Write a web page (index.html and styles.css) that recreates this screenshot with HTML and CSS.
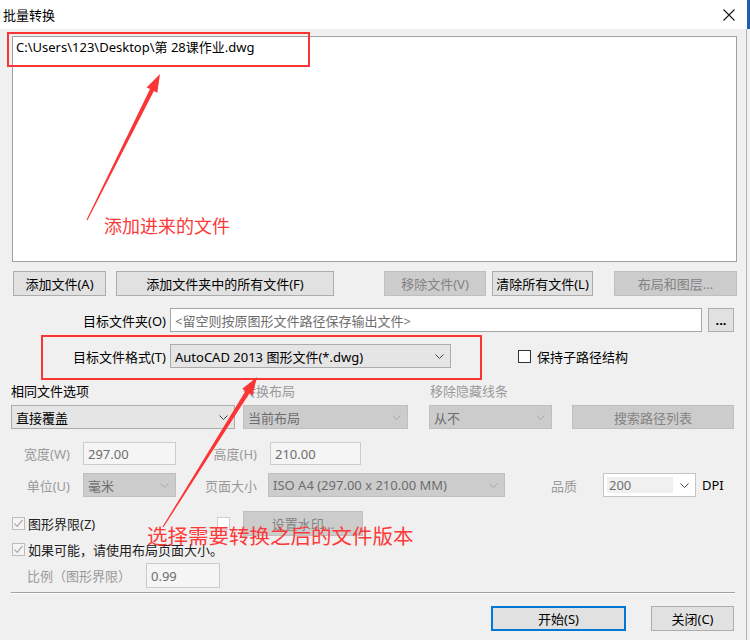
FILE: index.html
```html
<!DOCTYPE html>
<html lang="zh-CN">
<head>
    <meta charset="UTF-8">
    <title>批量转换</title>
    <link rel="stylesheet" href="styles.css">
</head>
<body>
<div class="dialog">
    <div class="titlebar">
        <span class="title">批量转换</span>
        <svg class="close" width="12" height="12" viewBox="0 0 12 12"><path d="M0.5 0.5L11.5 11.5M11.5 0.5L0.5 11.5" stroke="#1a1a1a" stroke-width="1.1"/></svg>
    </div>

    <div class="filelist">
        <div class="file">C:\Users\123\Desktop\第 28课作业.dwg</div>
    </div>

    <div class="row btnrow">
        <button class="btn b-add">添加文件(A)</button>
        <button class="btn b-addall">添加文件夹中的所有文件(F)</button>
        <button class="btn b-remove" disabled>移除文件(V)</button>
        <button class="btn b-clear">清除所有文件(L)</button>
        <button class="btn b-layout" disabled>布局和图层...</button>
    </div>

    <div class="row folderrow">
        <span class="lbl-main">目标文件夹(O)</span>
        <div class="textbox folder">&lt;留空则按原图形文件路径保存输出文件&gt;</div>
        <button class="btn b-browse">...</button>
    </div>

    <div class="row formatrow">
        <span class="lbl-main">目标文件格式(T)</span>
        <div class="combo format"><span>AutoCAD 2013 图形文件(*.dwg)</span><svg class="chev" width="9" height="5" viewBox="0 0 9 5"><path d="M0.5 0.5L4.5 4.5L8.5 0.5" fill="none" stroke="currentColor"/></svg></div>
        <span class="chk keep"></span>
        <span class="keep-lbl">保持子路径结构</span>
    </div>

    <div class="row caprow">
        <span class="cap cap-same">相同文件选项</span>
        <span class="cap cap-layout off">转换布局</span>
        <span class="cap off">移除隐藏线条</span>
    </div>

    <div class="row selrow">
        <div class="combo same"><span>直接覆盖</span><svg class="chev" width="9" height="5" viewBox="0 0 9 5"><path d="M0.5 0.5L4.5 4.5L8.5 0.5" fill="none" stroke="currentColor"/></svg></div>
        <div class="combo dis layout"><span>当前布局</span><svg class="chev" width="9" height="5" viewBox="0 0 9 5"><path d="M0.5 0.5L4.5 4.5L8.5 0.5" fill="none" stroke="currentColor"/></svg></div>
        <div class="combo dis hidden-lines"><span>从不</span><svg class="chev" width="9" height="5" viewBox="0 0 9 5"><path d="M0.5 0.5L4.5 4.5L8.5 0.5" fill="none" stroke="currentColor"/></svg></div>
        <button class="btn b-search" disabled>搜索路径列表</button>
    </div>

    <div class="row widthrow">
        <span class="lbl-a off">宽度(W)</span>
        <div class="textbox dis num">297.00</div>
        <span class="lbl-b off">高度(H)</span>
        <div class="textbox dis num num-h">210.00</div>
    </div>

    <div class="row unitrow">
        <span class="lbl-a off">单位(U)</span>
        <div class="combo dis unit"><span>毫米</span><svg class="chev" width="9" height="5" viewBox="0 0 9 5"><path d="M0.5 0.5L4.5 4.5L8.5 0.5" fill="none" stroke="currentColor"/></svg></div>
        <span class="lbl-b off">页面大小</span>
        <div class="combo dis paper"><span>ISO A4 (297.00 x 210.00 MM)</span><svg class="chev" width="9" height="5" viewBox="0 0 9 5"><path d="M0.5 0.5L4.5 4.5L8.5 0.5" fill="none" stroke="currentColor"/></svg></div>
        <span class="lbl-q off">品质</span>
        <div class="combo dpi"><span class="dpi-val">200</span><svg class="chev" width="9" height="5" viewBox="0 0 9 5"><path d="M0.5 0.5L4.5 4.5L8.5 0.5" fill="none" stroke="currentColor"/></svg></div>
        <span class="dpi-unit">DPI</span>
    </div>

    <div class="row chkrow1">
        <span class="chk dis"><svg width="11" height="11" viewBox="0 0 11 11"><path d="M1.5 5.5L4.2 8.3L9.5 2" fill="none" stroke="#a9a9a9" stroke-width="1.2"/></svg></span>
        <span class="chk-lbl limits">图形界限(Z)</span>
        <span class="chk blank"></span>
        <button class="btn b-water" disabled>设置水印...</button>
    </div>

    <div class="row chkrow2">
        <span class="chk dis"><svg width="11" height="11" viewBox="0 0 11 11"><path d="M1.5 5.5L4.2 8.3L9.5 2" fill="none" stroke="#a9a9a9" stroke-width="1.2"/></svg></span>
        <span class="chk-lbl">如果可能，请使用布局页面大小。</span>
    </div>

    <div class="row scalerow">
        <span class="scale-lbl off">比例（图形界限）</span>
        <div class="textbox dis num scale">0.99</div>
    </div>

    <div class="sep"></div>

    <div class="row footer">
        <button class="btn b-start">开始(S)</button>
        <button class="btn b-close">关闭(C)</button>
    </div>
</div>

<!-- 标注 -->
<div class="mark mark-file"></div>
<div class="mark mark-format"></div>
<svg class="arrows" width="750" height="640" viewBox="0 0 750 640">
    <polygon points="86.5,219.7 150.0,89.1 146.6,87.4 160,74 157.3,92.8 153.9,91.1 87.5,220.3" fill="#fb3535"/>
    <polygon points="162.5,526.7 245.5,391.1 242.3,389.1 257,377 252.5,395.5 249.3,393.5 163.5,527.3" fill="#fb3535"/>
</svg>
<div class="note note-file">添加进来的文件</div>
<div class="note note-format">选择需要转换之后的文件版本</div>
</body>
</html>
```

FILE: styles.css
```css
* {
    box-sizing: border-box;
}

html,
body {
    margin: 0;
    padding: 0;
}

body {
    width: 750px;
    height: 640px;
    overflow: hidden;
    position: relative;
    background: #f0f0f0;
    font-family: "Noto Sans", "Noto Sans CJK SC", sans-serif;
    font-size: 13px;
    color: #000;
}

.dialog {
    width: 747px;
    height: 640px;
    border-right: 1px solid #b4b4b4;
}

.titlebar {
    width: 750px;
    height: 29px;
    display: flex;
    align-items: center;
    padding-left: 3px;
    background: #fff;
    border-right: 3px solid #1f5fb0;
}

.close {
    margin-left: auto;
    margin-right: 12px;
}

.filelist {
    margin: 7px 0 0 12px;
    width: 725px;
    height: 226px;
    background: #fff;
    border: 1px solid #a0a0a0;
    padding: 2px 3px;
}

.file {
    line-height: 17px;
}

.row {
    display: flex;
    align-items: center;
}

/* 按钮 */
.btn {
    font: inherit;
    height: 25px;
    padding: 0;
    background: #e1e1e1;
    border: 1px solid #adadad;
    color: #000;
    white-space: nowrap;
}

.btn:disabled {
    background: #cccccc;
    border-color: #bfbfbf;
    color: #838383;
}

.btnrow {
    margin-top: 9px;
    height: 25px;
}

.b-add { margin-left: 13px; width: 93px; }
.b-addall { margin-left: 10px; width: 218px; }
.b-remove { margin-left: 50px; width: 102px; }
.b-clear { margin-left: 6px; width: 101px; }
.b-layout { margin-left: 21px; width: 123px; }

.textbox {
    height: 100%;
    display: flex;
    align-items: center;
    background: #fff;
    border: 1px solid #a5a5a5;
    padding-left: 4px;
    white-space: nowrap;
}

.textbox.dis {
    background: #f5f5f5;
    border-color: #cccccc;
    color: #6d6d6d;
}

.folderrow {
    margin-top: 12px;
    height: 24px;
}

.lbl-main {
    width: 166px;
    text-align: right;
}

.folder {
    margin-left: 4px;
    width: 532px;
    color: #6d6d6d;
}

.b-browse {
    margin-left: 6px;
    width: 26px;
    height: 24px;
    line-height: 10px;
    font-weight: bold;
}

/* 下拉框 */
.combo {
    height: 100%;
    display: flex;
    align-items: center;
    justify-content: space-between;
    padding: 0 6px 0 4px;
    background: #e5e5e5;
    border: 1px solid #acacac;
    color: #000;
    white-space: nowrap;
}

.combo .chev {
    color: #444;
    flex: none;
}

.combo.dis {
    background: #cccccc;
    border-color: #bfbfbf;
    color: #6d6d6d;
}

.combo.dis .chev {
    color: #a8a8a8;
}

.formatrow {
    margin-top: 12px;
    height: 24px;
}

.format {
    margin-left: 4px;
    width: 281px;
}

.chk {
    width: 13px;
    height: 13px;
    flex: none;
    display: flex;
    align-items: center;
    justify-content: center;
    border: 1px solid #333;
    background: #fff;
}

.keep {
    margin-left: 67px;
}

.keep-lbl {
    margin-left: 6px;
}

.caprow {
    margin-top: 13px;
    height: 18px;
}

.cap-same {
    margin-left: 11px;
    width: 232px;
}

.cap-layout {
    width: 187px;
}

.off {
    color: #9a9a9a;
}

.selrow {
    margin-top: 6px;
    height: 24px;
}

.same { margin-left: 11px; width: 224px; }
.layout { margin-left: 8px; width: 165px; }
.hidden-lines { margin-left: 21px; width: 123px; }
.b-search { margin-left: 20px; width: 162px; height: 24px; }

.widthrow {
    margin-top: 13px;
    height: 23px;
}

.lbl-a {
    width: 70px;
    text-align: right;
}

.lbl-b {
    width: 81px;
    text-align: right;
}

.num {
    margin-left: 13px;
    width: 93px;
}

.num-h {
    width: 91px;
}

.unitrow {
    margin-top: 8px;
    height: 24px;
}

.unit { margin-left: 13px; width: 93px; }
.paper { margin-left: 11px; width: 237px; }

.lbl-q {
    margin-left: 46px;
    width: 52px;
}

.dpi {
    width: 93px;
    background: #fff;
    border-color: #c4c4c4;
    padding: 3px 6px 3px 3px;
}

.dpi-val {
    height: 100%;
    width: 66px;
    display: flex;
    align-items: center;
    padding-left: 2px;
    background: #f0f0f0;
    color: #707070;
}

.dpi-unit {
    margin-left: 6px;
}

.chkrow1 {
    margin-top: 14px;
    height: 25px;
}

.chkrow2 {
    margin-top: 4px;
    height: 18px;
}

.chk.dis {
    margin-left: 12px;
    border-color: #bcbcbc;
    background: #f4f4f4;
}

.chk-lbl {
    margin-left: 3px;
    color: #222;
    white-space: nowrap;
}

.limits {
    width: 189px;
}

.chk.blank {
    border-color: #cfcfcf;
}

.b-water {
    margin-left: 13px;
    width: 120px;
}

.scalerow {
    margin-top: 5px;
    height: 25px;
}

.scale-lbl {
    margin-left: 27px;
    width: 119px;
    white-space: nowrap;
}

.scale {
    margin-left: 0;
    width: 74px;
}

.sep {
    margin: 4px 0 0 11px;
    width: 724px;
    height: 2px;
    border-top: 1px solid #a0a0a0;
    border-bottom: 1px solid #fff;
}

.footer {
    margin-top: 12px;
    height: 25px;
}

.b-start {
    margin-left: 491px;
    width: 135px;
    border: 2px solid #0078d7;
}

.b-close {
    margin-left: 25px;
    width: 83px;
}

/* 标注 */
.mark {
    position: absolute;
    border: 2px solid #fb3535;
}

.mark-file {
    left: 7px;
    top: 32px;
    width: 303px;
    height: 35px;
}

.mark-format {
    left: 41px;
    top: 335px;
    width: 441px;
    height: 45px;
}

.arrows {
    position: absolute;
    left: 0;
    top: 0;
}

.note {
    position: absolute;
    color: #fb3a3a;
    line-height: 1;
    white-space: nowrap;
    font-family: "Noto Sans CJK SC", sans-serif;
}

.note-file {
    left: 104px;
    top: 216px;
    font-size: 18px;
}

.note-format {
    left: 147px;
    top: 525px;
    font-size: 20.5px;
}
```
